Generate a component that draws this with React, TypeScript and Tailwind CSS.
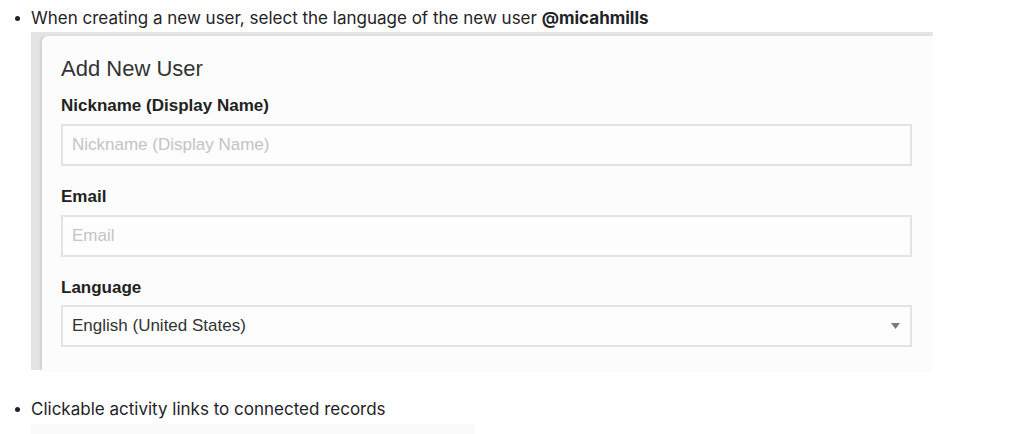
function Bullet({ children }: { children: React.ReactNode }) {
  return (
    <div className="flex items-start">
      <span className="flex w-[31px] justify-center pl-[3px] pt-[10px]">
        <span className="block h-[5px] w-[5px] rounded-full bg-[#1f2328]" />
      </span>
      <p className="font-['Inter',sans-serif] text-[17px] leading-[24px] text-[#1f2328]">{children}</p>
    </div>
  );
}

function Field({ label, children }: { label: string; children: React.ReactNode }) {
  return (
    <div className="flex flex-col">
      <label className="text-[17px] font-bold leading-[20px] text-[#222]">{label}</label>
      {children}
    </div>
  );
}

export default function App() {
  return (
    <div className="h-[434px] w-[1024px] overflow-hidden bg-white font-['Liberation_Sans',Arial,sans-serif]">
      <div className="pt-[6px]">
        <Bullet>
          When creating a new user, select the language of the new user <b>@micahmills</b>
        </Bullet>
      </div>

      {/* screenshot of the form */}
      <div className="ml-[31px] mt-[2px] w-[902px] bg-[#e4e4e4] pl-[11px] pt-[4px]">
        <div className="rounded-tl-[6px] bg-[#fcfcfc] pb-[23px] pl-[19px] pr-[21px] pt-[20px] shadow-[-2px_0_2px_rgba(0,0,0,0.08)]">
          <h2 className="text-[22px] leading-[26px] text-[#333]">Add New User</h2>

          <div className="mt-[14px] flex flex-col gap-[21px]">
            <Field label="Nickname (Display Name)">
              <div className="mt-[8px] flex h-[42px] items-center border-2 border-[#e3e3e3] bg-[#fdfdfd] px-[9px] text-[17px] text-[#c4c4c4]">
                Nickname (Display Name)
              </div>
            </Field>
            <Field label="Email">
              <div className="mt-[8px] flex h-[42px] items-center border-2 border-[#e3e3e3] bg-[#fdfdfd] px-[9px] text-[17px] text-[#c4c4c4]">
                Email
              </div>
            </Field>
            <Field label="Language">
              <div className="mt-[7px] flex h-[42px] items-center justify-between border-2 border-[#e3e3e3] bg-[#fdfdfd] pl-[9px] pr-[10px] text-[17px] text-[#333]">
                <span>English (United States)</span>
                <svg width="9" height="6" viewBox="0 0 9 6">
                  <path d="M0 0h9L4.5 6z" fill="#7a7a7a" />
                </svg>
              </div>
            </Field>
          </div>
        </div>
      </div>

      <div className="pt-[27px]">
        <Bullet>Clickable activity links to connected records</Bullet>
      </div>
      <div className="ml-[31px] mt-[3px] h-[12px] w-[444px] bg-[#fafafa]" />
    </div>
  );
}
